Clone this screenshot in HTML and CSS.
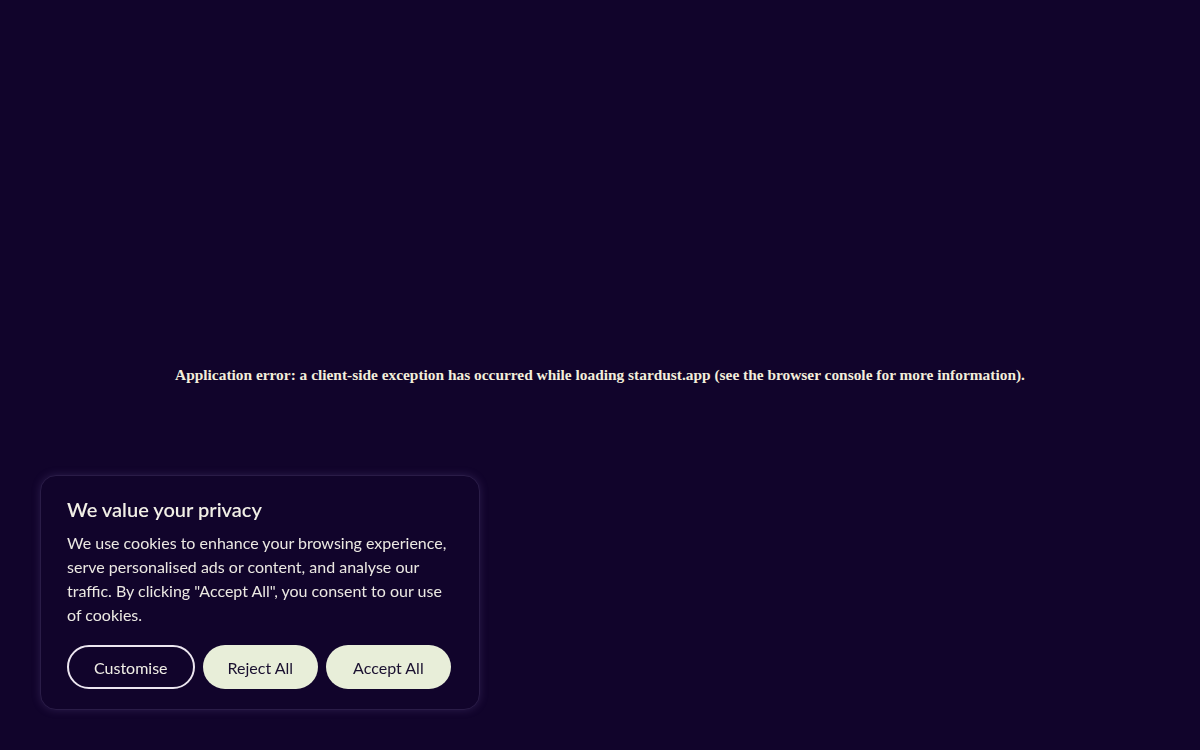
FILE: index.html
```html
<!DOCTYPE html>
<html lang="en">
<head>
    <meta charset="UTF-8">
    <title>stardust.app</title>
    <link rel="stylesheet" href="styles.css">
</head>
<body>
    <div class="error-page">
        <h2 class="error-text">Application error: a client-side exception has occurred while loading stardust.app (see the browser console for more information).</h2>
    </div>

    <div class="cookie-banner">
        <h3 class="cookie-title">We value your privacy</h3>
        <p class="cookie-text">We use cookies to enhance your browsing experience, serve personalised ads or content, and analyse our traffic. By clicking "Accept All", you consent to our use of cookies.</p>
        <div class="cookie-actions">
            <button class="cookie-btn cookie-btn-outline">Customise</button>
            <button class="cookie-btn cookie-btn-fill">Reject All</button>
            <button class="cookie-btn cookie-btn-fill cookie-btn-wide">Accept All</button>
        </div>
    </div>
</body>
</html>
```

FILE: styles.css
```css
html, body {
    margin: 0;
    padding: 0;
    height: 100%;
}

body {
    background: #11042b;
    color: #f1efe0;
    font-family: Lato, 'Noto Sans', sans-serif;
}

.error-page {
    height: 100vh;
    display: flex;
    align-items: center;
    justify-content: center;
}

.error-text {
    margin: 0;
    font-family: 'Liberation Serif', 'DejaVu Serif', serif;
    font-size: 15.4px;
    font-weight: bold;
    color: #f3eedb;
}

.cookie-banner {
    position: fixed;
    left: 40px;
    bottom: 40px;
    width: 440px;
    box-sizing: border-box;
    padding: 21px 27px 20px 26px;
    background: #11042b;
    border: 1px solid #2a1c47;
    border-radius: 16px;
    box-shadow: 0 0 8px rgba(120, 100, 170, 0.25);
}

.cookie-title {
    margin: 0 0 10px;
    font-size: 20px;
    font-weight: 600;
    color: #f1efe6;
}

.cookie-text {
    margin: 0 0 18px;
    max-width: 384px;
    font-size: 16px;
    line-height: 24px;
    color: #ebe8e2;
}

.cookie-actions {
    display: flex;
    gap: 8px;
}

.cookie-btn {
    height: 44px;
    padding: 0 25px;
    border-radius: 22px;
    font-family: inherit;
    font-size: 16px;
    white-space: nowrap;
    cursor: pointer;
}

.cookie-btn-wide {
    padding: 0 27px;
}

.cookie-btn-outline {
    background: transparent;
    color: #f1efe6;
    border: 2px solid #ece6f0;
}

.cookie-btn-fill {
    background: #e8eed9;
    color: #1a1030;
    border: none;
}
```
